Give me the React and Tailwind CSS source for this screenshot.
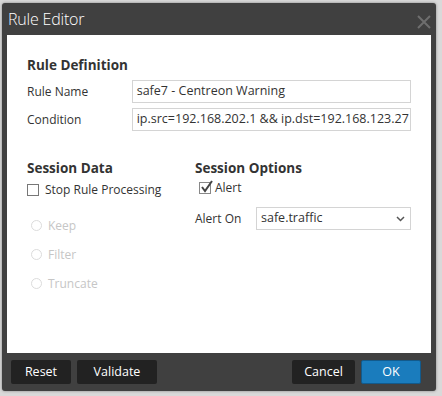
const App = () => {
    return (
        <div className="w-[442px] h-[396px] bg-[#d9d9d9] pt-[3px] pl-[2px]" style={{ fontFamily: '"Open Sans", sans-serif' }}>
            <div className="w-[434px] h-[388px] bg-[#404040] rounded-[3px] flex flex-col shadow-[0_0_3px_rgba(0,0,0,0.4)]">
                {/* title bar */}
                <div className="h-[32px] shrink-0 flex items-center justify-between pl-[6px] pr-[5px]">
                    <h1 className="text-[16px] font-light tracking-[-0.2px] text-white leading-none">Rule Editor</h1>
                    <svg width="14" height="14" viewBox="0 0 14 14" className="mt-[5px]">
                        <path d="M1 1 L13 13 M13 1 L1 13" stroke="#6e6e6e" strokeWidth="2" />
                    </svg>
                </div>

                {/* body */}
                <div className="mx-[5px] h-[318px] shrink-0 bg-white text-[#333] text-[12px] px-[20px] pt-[20px]">
                    <h2 className="font-bold text-[13.5px] leading-[20px]">Rule Definition</h2>
                    <div className="flex items-center mt-[5px]">
                        <label className="w-[105px]">Rule Name</label>
                        <div className="w-[280px] h-[23px] border border-[#d4d4d4] px-[4px] flex items-center text-[12.5px]">safe7 - Centreon Warning</div>
                    </div>
                    <div className="flex items-center mt-[5px]">
                        <label className="w-[105px]">Condition</label>
                        <div className="w-[280px] h-[23px] border border-[#d4d4d4] px-[4px] flex items-center overflow-hidden whitespace-nowrap text-[12.5px]">ip.src=192.168.202.1 &amp;&amp; ip.dst=192.168.123.27 &amp;&amp;</div>
                    </div>

                    <div className="flex mt-[27px]">
                        <div className="w-[169px]">
                            <h2 className="font-bold text-[13.5px] leading-[20px]">Session Data</h2>
                            <label className="flex items-center mt-[3px]">
                                <span className="w-[12px] h-[12px] border border-[#777] mr-[6px]"></span>
                                Stop Rule Processing
                            </label>
                            <div className="mt-[16px] flex flex-col gap-[8px] text-[#c6c6c6] pl-[4px]">
                                {['Keep', 'Filter', 'Truncate'].map((t) => (
                                    <label key={t} className="flex items-center h-[21px]">
                                        <span className="w-[11px] h-[11px] rounded-full border border-[#dcdcdc] mr-[6px]"></span>
                                        {t}
                                    </label>
                                ))}
                            </div>
                        </div>
                        <div className="flex-1">
                            <h2 className="font-bold text-[13.5px] leading-[20px]">Session Options</h2>
                            <label className="flex items-center mt-[1px] pl-[4px]">
                                <span className="w-[12px] h-[12px] border border-[#888] mr-[4px] relative">
                                    <svg width="14" height="14" viewBox="0 0 14 14" className="absolute left-[0px] top-[-4px]">
                                        <path d="M2 8 L5 12 L12 2" stroke="#444" strokeWidth="2" fill="none" />
                                    </svg>
                                </span>
                                Alert
                            </label>
                            <div className="flex items-center mt-[10px]">
                                <label className="w-[61px]">Alert On</label>
                                <div className="w-[155px] h-[23px] border border-[#d4d4d4] px-[4px] flex items-center justify-between text-[12.5px]">
                                    safe.traffic
                                    <svg width="9" height="6" viewBox="0 0 9 6" className="mr-[1px]">
                                        <path d="M1 1 L4.5 4.5 L8 1" stroke="#555" strokeWidth="1.5" fill="none" />
                                    </svg>
                                </div>
                            </div>
                        </div>
                    </div>
                </div>

                {/* footer */}
                <div className="flex-1 flex items-center justify-between pl-[9px] pr-[15px] text-[12.5px] text-white">
                    <div className="flex gap-[6px]">
                        <button className="w-[60px] h-[24px] bg-[#222] rounded-[2px]">Reset</button>
                        <button className="w-[80px] h-[24px] bg-[#222] rounded-[2px]">Validate</button>
                    </div>
                    <div className="flex gap-[6px]">
                        <button className="w-[63px] h-[24px] bg-[#222] rounded-[2px]">Cancel</button>
                        <button className="w-[60px] h-[24px] bg-[#1a7cbd] border border-[#125a8c] rounded-[2px]">OK</button>
                    </div>
                </div>
            </div>
        </div>
    )
}

export default App;
